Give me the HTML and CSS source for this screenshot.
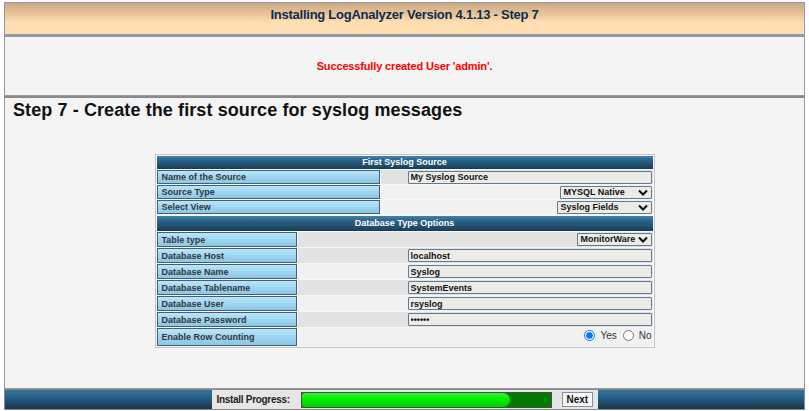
FILE: index.html
```html
<!DOCTYPE html>
<html>
<head>
<meta charset="utf-8">
<title>Installing LogAnalyzer</title>
<link rel="stylesheet" href="styles.css">
</head>
<body>
<div class="hdr">Installing LogAnalyzer Version 4.1.13 - Step 7</div>
<div class="msg"><span class="ok">Successfully created User 'admin'.</span></div>
<div class="main">
  <h1 class="title">Step 7 - Create the first source for syslog messages</h1>
  <div class="panel">
    <table class="form t1">
      <tr><th colspan="2">First Syslog Source</th></tr>
      <tr class="dk"><td class="lbl">Name of the Source</td><td class="val"><input class="inp" type="text" value="My Syslog Source"></td></tr>
      <tr class="lt"><td class="lbl">Source Type</td><td class="val"><span class="sel s-type">MYSQL Native<svg class="chev" viewBox="0 0 10 7" width="10" height="7"><path d="M1 1.5 L5 5.5 L9 1.5" fill="none" stroke="#111" stroke-width="2"/></svg></span></td></tr>
      <tr class="lt"><td class="lbl">Select View</td><td class="val"><span class="sel s-view">Syslog Fields<svg class="chev" viewBox="0 0 10 7" width="10" height="7"><path d="M1 1.5 L5 5.5 L9 1.5" fill="none" stroke="#111" stroke-width="2"/></svg></span></td></tr>
    </table>
    <table class="form t2">
      <tr><th colspan="2">Database Type Options</th></tr>
      <tr class="dk"><td class="lbl">Table type</td><td class="val"><span class="sel s-tab">MonitorWare<svg class="chev" viewBox="0 0 10 7" width="10" height="7"><path d="M1 1.5 L5 5.5 L9 1.5" fill="none" stroke="#111" stroke-width="2"/></svg></span></td></tr>
      <tr class="dk"><td class="lbl">Database Host</td><td class="val"><input class="inp" type="text" value="localhost"></td></tr>
      <tr class="lt"><td class="lbl">Database Name</td><td class="val"><input class="inp" type="text" value="Syslog"></td></tr>
      <tr class="dk"><td class="lbl">Database Tablename</td><td class="val"><input class="inp" type="text" value="SystemEvents"></td></tr>
      <tr class="lt"><td class="lbl">Database User</td><td class="val"><input class="inp" type="text" value="rsyslog"></td></tr>
      <tr class="dk"><td class="lbl">Database Password</td><td class="val"><input class="inp" type="password" value="secret"></td></tr>
      <tr class="lt tall"><td class="lbl">Enable Row Counting</td><td class="val"><label class="rad"><input type="radio" name="rc" checked> Yes</label><label class="rad"><input type="radio" name="rc"> No</label></td></tr>
    </table>
  </div>
</div>
<div class="ftr">
  <div class="prog">
    <span class="plabel">Install Progress:</span>
    <span class="bar"><span class="fill"></span></span>
    <span class="next">Next</span>
  </div>
</div>
</body>
</html>
```
FILE: styles.css
```css
html, body { margin: 0; }
body {
  padding: 2px 4px 0 4px;
  background: #ffffff;
  font-family: "Liberation Sans", Arial, sans-serif;
}
.hdr {
  box-sizing: border-box;
  height: 33px;
  border: 1px solid #8e9aa8;
  background: linear-gradient(#cca884, #edc89c 40%, #ffdeb2 62%, #ffdeb2);
  text-align: center;
  padding-top: 3px;
  font: bold 13px/18px "Liberation Sans", Arial, sans-serif;
  letter-spacing: -0.25px;
  color: #0d2b4e;
}
.msg {
  box-sizing: border-box;
  height: 61px;
  border: 1px solid #999999;
  border-top-width: 2px;
  background: #f4f4f4;
  display: flex;
  align-items: center;
  justify-content: center;
}
.ok {
  color: #ff0000;
  font: bold 11px/14px "Liberation Sans", Arial, sans-serif;
  letter-spacing: -0.15px;
}
.main {
  box-sizing: border-box;
  height: 293px;
  border: 1px solid #999999;
  border-top: 2px solid #8a8a8a;
  background: #f4f4f4;
  padding: 2px 8px 0;
}
.title {
  margin: 0;
  font: bold 18px/21px "Liberation Sans", Arial, sans-serif;
  letter-spacing: 0.1px;
  color: #111111;
}
.panel {
  box-sizing: border-box;
  width: 500px;
  margin: 33px auto 0;
  border: 1px solid #c4c4c4;
  background: #f7f7f7;
}
.form {
  width: 100%;
  border-collapse: separate;
  border-spacing: 1px;
}
.form th {
  height: 13px;
  padding: 0;
  background: linear-gradient(#4384ab, #2a6489 30%, #21506f 70%, #1b3a50);
  color: #ffffff;
  font: bold 9px/13px "Liberation Sans", Arial, sans-serif;
  text-align: center;
}
.t2 th { height: 15px; }
.form td {
  padding: 0;
  height: 14px;
  font: bold 9px/12px "Liberation Sans", Arial, sans-serif;
}
.t2 td { height: 15px; }
.form .lbl {
  box-sizing: border-box;
  border: 1px solid #3f6078;
  background: linear-gradient(#b9e5f9, #9fd5ef 50%, #8cc7e6);
  color: #353535;
  padding: 0 4px;
  text-align: left;
}
.t1 .lbl { width: 223px; }
.t2 .lbl { width: 140px; }
.form .val {
  text-align: right;
  padding-right: 1px;
}
.dk .val { background: #e2e2e2; }
.lt .val { background: #f1f1f1; }
.form .tall td { height: 18px; }
.inp {
  box-sizing: border-box;
  width: 244px;
  height: 13px;
  margin: 0;
  padding: 0 2px;
  border: 1px solid #5b7b98;
  border-radius: 1px;
  background: #ecebe6;
  color: #111111;
  font: bold 9px "Liberation Sans", Arial, sans-serif;
  vertical-align: middle;
  outline: none;
}
.sel {
  box-sizing: border-box;
  display: inline-flex;
  align-items: center;
  justify-content: space-between;
  height: 13px;
  padding: 0 3px 0 3px;
  border: 1px solid #5b7b98;
  border-radius: 1px;
  background: #ecebe6;
  color: #111111;
  font: bold 9px/11px "Liberation Sans", Arial, sans-serif;
  vertical-align: middle;
  text-align: left;
}
.s-type { width: 92px; }
.s-view { width: 95px; }
.s-tab { width: 75px; }
.chev { flex: none; margin-left: 2px; }
.rad {
  display: inline-flex;
  align-items: center;
  font: normal 10px "Liberation Sans", Arial, sans-serif;
  color: #333333;
  margin-left: 2px;
}
.rad input {
  width: 11px;
  height: 11px;
  margin: 0 5px 0 4px;
}
.ftr {
  box-sizing: border-box;
  height: 21px;
  border: 1px solid #8a8a8a;
  background: linear-gradient(#3374a0, #28628a 35%, #1f4a66 70%, #1a3446);
  display: flex;
  justify-content: center;
}
.prog {
  width: 386px;
  background: #e6e6e6;
  display: flex;
  align-items: center;
}
.plabel {
  width: 84px;
  padding-left: 5px;
  font: bold 10px/14px "Liberation Sans", Arial, sans-serif;
  letter-spacing: -0.3px;
  white-space: nowrap;
  color: #222222;
}
.bar {
  box-sizing: border-box;
  width: 251px;
  height: 16px;
  border: 1px solid #4a4a4a;
  background: #007a00;
  display: flex;
}
.fill {
  width: 208px;
  border-radius: 3px 7px 7px 3px;
  background: linear-gradient(#2ff52f, #00ee00 45%, #00d000);
}
.next {
  box-sizing: border-box;
  margin-left: 10px;
  height: 15px;
  padding: 0 4px;
  border: 1px solid #7d93aa;
  background: #f8f8f8;
  font: bold 10px/13px "Liberation Sans", Arial, sans-serif;
  color: #111111;
}
```
